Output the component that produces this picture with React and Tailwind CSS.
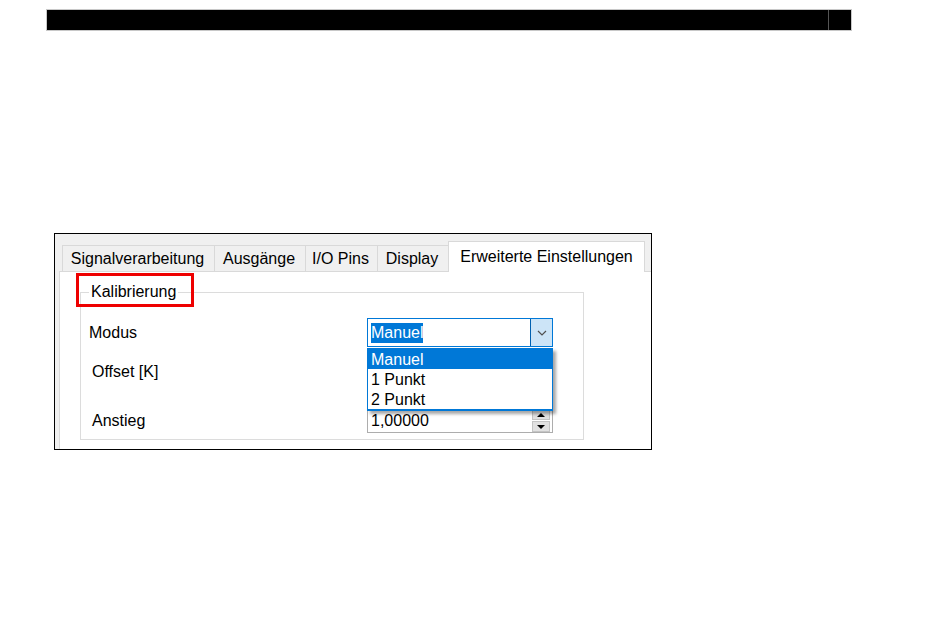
import React from "react";

const tabs = [
    { label: "Signalverarbeitung", w: "w-[152px]" },
    { label: "Ausgänge", w: "w-[91px]" },
    { label: "I/O Pins", w: "w-[72px]" },
    { label: "Display", w: "w-[71px]" },
];

function Chevron() {
    return (
        <svg width="10" height="6" viewBox="0 0 10 6" fill="none">
            <path d="M1 1 L5 5 L9 1" stroke="#505050" strokeWidth="1.2" />
        </svg>
    );
}

function Spinner() {
    return (
        <div className="flex flex-col w-[18px] h-[23px] gap-px">
            <div className="flex-1 flex items-center justify-center bg-[#e1e1e1] border border-[#c4c4c4]">
                <svg width="8" height="4" viewBox="0 0 8 4"><path d="M0 4 L4 0 L8 4 Z" fill="#000" /></svg>
            </div>
            <div className="flex-1 flex items-center justify-center bg-[#e1e1e1] border border-[#c4c4c4]">
                <svg width="8" height="4" viewBox="0 0 8 4"><path d="M0 0 L8 0 L4 4 Z" fill="#000" /></svg>
            </div>
        </div>
    );
}

export default function App() {
    return (
        <div
            className="w-[950px] h-[638px] bg-white text-black text-[16px] overflow-hidden"
            style={{ fontFamily: '"Liberation Sans", Arial, sans-serif' }}
        >
            {/* black bar */}
            <div className="ml-[46px] mt-[9px] w-[806px] h-[22px] border border-[#c8c8c8] bg-black flex">
                <div className="w-[781px] h-full" />
                <div className="flex-1 h-full border-l border-[#555]" />
            </div>

            {/* settings window */}
            <div className="ml-[54px] mt-[202px] w-[598px] h-[217px] border border-black bg-[#f0f0f0] flex flex-col">
                <div className="h-[37px] flex items-end pl-[7px]">
                    {tabs.map((t) => (
                        <div
                            key={t.label}
                            className={`${t.w} h-[26px] flex items-center justify-center pr-[2px] bg-[#f0f0f0] border-t border-l border-[#d9d9d9]`}
                        >
                            {t.label}
                        </div>
                    ))}
                    <div className="w-[197px] h-[31px] -mb-px relative z-10 flex items-center justify-center bg-white border-t border-l border-r border-[#d9d9d9] pb-px">
                        Erweiterte Einstellungen
                    </div>
                </div>

                <div className="flex-1 ml-[4px] bg-white border-t border-l border-[#d9d9d9]">
                    <div className="relative ml-[20px] mt-[20px] w-[504px] h-[148px] border border-[#dcdcdc] pl-[8px] pt-[25px]">
                        <div className="absolute left-[8px] top-[-11px] h-[20px] px-[2px] leading-[20px] bg-white">
                            Kalibrierung
                        </div>
                        <div className="absolute left-[-5px] top-[-20px] w-[118px] h-[34px] border-[3px] border-[#ee0000]" />

                        {/* Modus */}
                        <div className="flex items-center h-[29px]">
                            <div className="w-[278px]">Modus</div>
                            <div className="relative w-[186px] h-[29px] border border-[#0078d7] bg-white flex">
                                <div className="flex-1 flex items-center pl-[3px]">
                                    <span className="bg-[#0078d7] text-white leading-[20px]">Manuel</span>
                                </div>
                                <div className="w-[22px] h-full bg-[#cce4f7] border-l border-[#0060b0] flex items-center justify-center">
                                    <Chevron />
                                </div>

                                {/* open list */}
                                <div className="absolute left-[-1px] top-[29px] w-[186px] z-20 bg-white border border-[#0078d7] border-b-2 shadow-[3px_3px_3px_rgba(0,0,0,0.35)]">
                                    <div className="h-[20px] leading-[21px] pl-[3px] bg-[#0078d7] text-white">Manuel</div>
                                    <div className="h-[20px] leading-[22px] pl-[3px]">1 Punkt</div>
                                    <div className="h-[20px] leading-[22px] pl-[3px]">2 Punkt</div>
                                </div>
                            </div>
                        </div>

                        {/* Offset (covered by the open list) */}
                        <div className="flex items-center h-[25px] mt-[12px]">
                            <div className="w-[278px] pl-[3px]">Offset [K]</div>
                            <div className="w-[186px] h-[25px] border border-[#adadad] bg-white flex items-center justify-end pr-[2px]">
                                <Spinner />
                            </div>
                        </div>

                        {/* Anstieg */}
                        <div className="flex items-center h-[25px] mt-[24px]">
                            <div className="w-[278px] pl-[3px]">Anstieg</div>
                            <div className="w-[186px] h-[25px] border border-[#adadad] bg-white flex items-center justify-between pl-[3px] pr-[2px]">
                                <span>1,00000</span>
                                <Spinner />
                            </div>
                        </div>
                    </div>
                </div>
            </div>
        </div>
    );
}
